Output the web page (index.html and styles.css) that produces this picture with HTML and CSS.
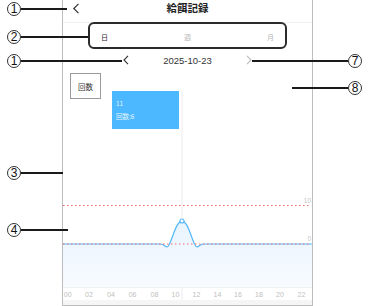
FILE: index.html
```html
<!DOCTYPE html>
<html lang="ja">
<head>
<meta charset="utf-8">
<link rel="stylesheet" href="styles.css">
</head>
<body>
<div class="stage">
  <div class="phone">
    <div class="header">
      <span class="back"><svg width="8" height="11" viewBox="0 0 8 11"><path d="M6.5 0.8 L1.8 5.5 L6.5 10.2" fill="none" stroke="#333" stroke-width="1.2"/></svg></span>
      <span class="title">給餌記録</span>
    </div>
    <div class="tabs">
      <span class="tab active">日</span>
      <span class="tab">週</span>
      <span class="tab">月</span>
    </div>
    <div class="datebar">
      <svg class="chev" width="8" height="10" viewBox="0 0 8 10"><path d="M6 0.8 L2 5 L6 9.2" fill="none" stroke="#333" stroke-width="1.1"/></svg>
      <span class="date">2025-10-23</span>
      <svg class="chev" width="8" height="10" viewBox="0 0 8 10"><path d="M2 0.8 L6 5 L2 9.2" fill="none" stroke="#bbb" stroke-width="1.1"/></svg>
    </div>
    <div class="chart">
      <svg class="plot" width="249" height="233" viewBox="0 0 249 233">
        <defs>
          <linearGradient id="fill" x1="0" y1="0" x2="0" y2="1">
            <stop offset="0" stop-color="#e8f4ff"/>
            <stop offset="1" stop-color="#f8fbff"/>
          </linearGradient>
        </defs>
        <line x1="119" y1="18" x2="119" y2="228" stroke="#ececec" stroke-width="1"/>
        <path d="M0 172 L98 172 C101 172 102 175 104 175 C108 175 112 149 119 149 C126 149 130 175 134 175 C136 175 137 172 140 172 L249 172 L249 215 L0 215 Z" fill="url(#fill)"/>
        <line x1="0" y1="215.5" x2="249" y2="215.5" stroke="#f0f0f0" stroke-width="1"/>
        <rect x="0" y="228" width="249" height="5" fill="#f5f5f5"/>
        <line x1="0" y1="133.5" x2="246" y2="133.5" stroke="#f26b6b" stroke-width="1" stroke-dasharray="1.5 2.5"/>
        <path d="M0 172 L98 172 C101 172 102 175 104 175 C108 175 112 149 119 149 C126 149 130 175 134 175 C136 175 137 172 140 172 L249 172" fill="none" stroke="#55b8fb" stroke-width="1.2"/>
        <line x1="0" y1="172" x2="246" y2="172" stroke="#f26b6b" stroke-width="1" stroke-dasharray="1.5 2.5"/>
        <circle cx="119" cy="149" r="2" fill="#fff" stroke="#55b8fb" stroke-width="1.1"/>
        <text class="ylab" x="248" y="131" text-anchor="end">10</text>
        <text class="ylab" x="248" y="169" text-anchor="end">0</text>
        <g class="xlab" text-anchor="middle">
          <text x="4.7" y="225">00</text>
          <text x="26" y="225">02</text>
          <text x="48" y="225">04</text>
          <text x="69.5" y="225">06</text>
          <text x="91.5" y="225">08</text>
          <text x="112.5" y="225">10</text>
          <text x="133.5" y="225">12</text>
          <text x="154.5" y="225">14</text>
          <text x="175" y="225">16</text>
          <text x="196" y="225">18</text>
          <text x="217" y="225">20</text>
          <text x="238.5" y="225">22</text>
        </g>
      </svg>
      <div class="mode">回数</div>
      <div class="tooltip">
        <span>11</span>
        <span>回数:6</span>
      </div>
    </div>
  </div>

  <div class="highlight"></div>

  <div class="callout left c1a"><span class="num">1</span><span class="lead"></span></div>
  <div class="callout left c2"><span class="num">2</span><span class="lead"></span></div>
  <div class="callout left c1b"><span class="num">1</span><span class="lead"></span></div>
  <div class="callout left c3"><span class="num">3</span><span class="lead"></span></div>
  <div class="callout left c4"><span class="num">4</span><span class="lead"></span></div>
  <div class="callout right c7"><span class="lead"></span><span class="num">7</span></div>
  <div class="callout right c8"><span class="lead"></span><span class="num">8</span></div>
</div>
</body>
</html>
```
FILE: styles.css
```css
* { box-sizing: border-box; }
html, body { margin: 0; padding: 0; background: #fff; }
body { font-family: "Liberation Sans", "Noto Sans CJK JP", sans-serif; color: #333; }

.stage { position: relative; width: 375px; height: 306px; overflow: hidden; }

.phone {
  margin-left: 62px;
  width: 251px;
  height: 306px;
  border-left: 1px solid #bdbdbd;
  border-right: 1px solid #bdbdbd;
  border-bottom: 1px solid #bdbdbd;
  display: flex;
  flex-direction: column;
  background: #fff;
}

.header {
  height: 23px;
  border-bottom: 1px solid #f0f0f0;
  display: flex;
  align-items: center;
  position: relative;
  padding-left: 9px;
  flex: none;
}
.back { display: flex; margin-top: -5px; }
.title {
  position: absolute;
  left: 0; right: 0;
  top: 1px;
  text-align: center;
  font-family: "Noto Sans CJK JP", sans-serif;
  font-weight: 700;
  font-size: 10.5px;
  line-height: 14px;
  color: #222;
}

.tabs {
  height: 25px;
  margin: 0 25px 0 25px;
  padding: 0 13px;
  display: flex;
  justify-content: space-between;
  align-items: center;
  flex: none;
}
.tab {
  font-family: "Noto Sans CJK JP", sans-serif;
  font-size: 7px;
  color: #b5b5b5;
  line-height: 10px;
  margin-top: 2px;
}
.tab.active { color: #222; }

.datebar {
  height: 24px;
  display: flex;
  align-items: center;
  justify-content: center;
  gap: 33px;
  flex: none;
}
.chev { display: block; }
.date { font-size: 9.5px; color: #333; letter-spacing: 0; }

.chart { position: relative; flex: 1; }
.plot { display: block; }
.ylab { font-size: 6.5px; fill: #c4c4c4; font-family: "Liberation Sans", sans-serif; }
.xlab text { font-size: 7px; fill: #c0c0c0; font-family: "Liberation Sans", sans-serif; }

.mode {
  position: absolute;
  left: 7px;
  top: 1px;
  width: 31px;
  height: 26px;
  border: 1px solid #9a9a9a;
  display: flex;
  align-items: center;
  justify-content: center;
  font-family: "Noto Sans CJK JP", sans-serif;
  font-size: 7.5px;
  color: #333;
  background: #fff;
}

.tooltip {
  position: absolute;
  left: 49px;
  top: 19px;
  width: 67px;
  height: 38px;
  background: #4cb8ff;
  display: flex;
  flex-direction: column;
  justify-content: center;
  gap: 4px;
  padding-left: 4px;
  font-family: "Noto Sans CJK JP", sans-serif;
  font-size: 6.5px;
  line-height: 9px;
  color: #e6f5ff;
}

.highlight {
  position: absolute;
  left: 88px;
  top: 22px;
  width: 199px;
  height: 27px;
  border: 2px solid #2b2b2b;
  border-radius: 6px;
}

.callout {
  position: absolute;
  display: flex;
  align-items: center;
  height: 14px;
}
.num {
  width: 14px;
  height: 14px;
  border: 1px solid #333;
  border-radius: 50%;
  display: flex;
  align-items: center;
  justify-content: center;
  font-family: "Liberation Sans", sans-serif;
  font-size: 12px;
  line-height: 1;
  color: #111;
  background: #fff;
  flex: none;
}
.lead { height: 1.5px; background: #1a1a1a; flex: none; }

.left { left: 7px; }
.c1a { top: 2px; }
.c1a .lead { width: 46px; }
.c2 { top: 30px; }
.c2 .lead { width: 67px; }
.c1b { top: 54px; }
.c1b .lead { width: 101px; }
.c3 { top: 166px; }
.c3 .lead { width: 42px; }
.c4 { top: 223px; }
.c4 .lead { width: 47px; }

.c7 { left: 252px; top: 54px; }
.c7 .lead { width: 96px; }
.c8 { left: 292px; top: 81px; }
.c8 .lead { width: 56px; }
```
